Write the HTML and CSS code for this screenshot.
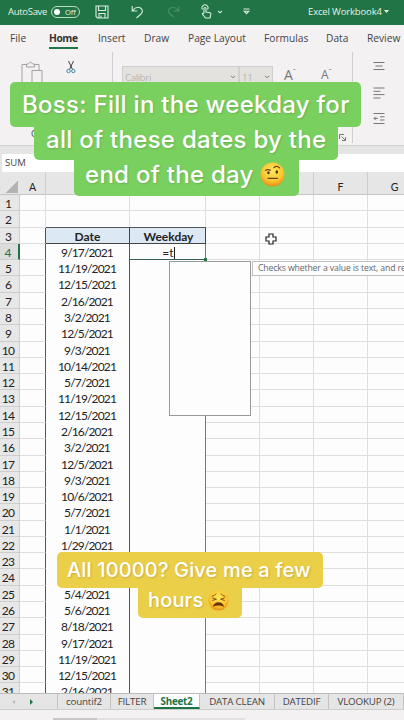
FILE: index.html
```
<!DOCTYPE html>
<html lang="en">
<head>
	<meta charset="utf-8">
	<title>Excel Workbook4</title>
	<link rel="stylesheet" href="styles.css">
</head>
<body>
	<div class="titlebar">
		<span class="autosave">AutoSave</span>
		<span class="toggle"><i></i>Off</span>
		<svg class="save" width="14" height="14" viewBox="0 0 14 14"><path d="M1 1h12v12H2.5L1 11.5zM3.5 1v4.5h7V1M4 13V8.5h6V13M6 13v-2.5"/></svg>
		<svg class="undo" width="13" height="14" viewBox="0 0 13 14"><path d="M1.2 1v5h5M1.5 5.7C4 2.5 7 1.3 9.8 3.2c2.3 1.7 1.9 4.1.2 5.8L5.5 13"/></svg>
		<svg class="redo" width="13" height="14" viewBox="0 0 13 14"><path d="M11.8 1v5h-5M11.5 5.7C9 2.5 6 1.3 3.2 3.2.9 4.9 1.3 7.3 3 9l3.5 3"/></svg>
		<svg class="touch" width="11" height="15" viewBox="0 0 11 15"><path d="M1.5 5.5a3 3 0 1 1 5 0M3 9V4.2q1-1.4 2 0V8l4 .8q1 .3.8 1.5L9 14H4.5L1.3 10q.5-1.4 1.7-.2"/></svg>
		<svg class="chev" width="6" height="4" viewBox="0 0 6 4"><path d="M1 .8l2 2 2-2"/></svg>
		<svg class="more" width="7" height="7" viewBox="0 0 7 7"><path d="M.5 1h6M1.2 3.2h4.6L3.5 5.6z"/></svg>
		<span class="book">Excel Workbook4</span>
		<svg class="drop" width="5" height="3" viewBox="0 0 5 3"><path d="M0 0h5L2.5 3z"/></svg>
	</div>

	<div class="ribbon">
		<div class="menu">
			<span class="m-file">File</span>
			<span class="m-home active">Home</span>
			<span class="m-insert">Insert</span>
			<span class="m-draw">Draw</span>
			<span class="m-page">Page Layout</span>
			<span class="m-form">Formulas</span>
			<span class="m-data">Data</span>
			<span class="m-rev">Review</span>
		</div>
		<div class="tools">
			<div class="clipboard">
				<svg class="paste" width="22" height="24" viewBox="0 0 22 24"><path d="M5 3.5H1V22h9M14 3.5h4V9M5.5 5V3h2q2-4 4 0h2v3h-8zM11 9.5h10V23H11z"/></svg>
				<svg class="cut" width="10" height="13" viewBox="0 0 10 13"><path class="blade" d="M2.5 0l4 8.5M7.5 0l-4 8.5"/><circle cx="2.5" cy="10" r="1.7"/><circle cx="7.3" cy="10" r="1.7"/></svg>
				<span class="launch-c">C</span>
			</div>
			<div class="font">
				<div class="fontbox"><span>Calibri</span><svg width="6" height="4" viewBox="0 0 6 4"><path d="M1 .8l2 2 2-2"/></svg></div>
				<div class="sizebox"><span>11</span><svg width="6" height="4" viewBox="0 0 6 4"><path d="M1 .8l2 2 2-2"/></svg></div>
				<span class="grow">A<sup>ˆ</sup></span>
				<span class="shrink">A<sup>ˇ</sup></span>
				<svg class="launch" width="7" height="7" viewBox="0 0 7 7"><path d="M.5 5V.5H5M2.5 2.5l4 4M6.5 3v3.5H3"/></svg>
			</div>
			<div class="align">
				<svg width="12" height="8" viewBox="0 0 12 8"><path d="M.5.5h11M2.5 4h7M.5 7.5h11"/></svg>
				<svg width="12" height="12" viewBox="0 0 12 12"><path d="M.5 1h11M.5 4.3h7M.5 7.6h11M.5 11h7"/></svg>
				<svg width="12" height="11" viewBox="0 0 12 11"><path d="M.5.5h11M7 3.8h4.5M7 7h4.5M.5 10.5h11M5 5.4H1M2.8 3.6L1 5.4l1.8 1.8"/></svg>
			</div>
		</div>
	</div>

	<div class="formula"><div class="namebox">SUM</div></div>

	<div class="sheet">
		<div class="cols">
			<span class="corner"></span><span>A</span><span></span><span></span><span></span><span></span><span>F</span><span>G</span>
		</div>
		<div class="rows" id="rows"></div>
		<div class="suggest"></div>
		<div class="tip">Checks whether a value is text, and re</div>
		<svg class="cursor" width="12" height="12" viewBox="0 0 12 12"><path d="M4 1h4v3h3v4H8v3H4V8H1V4h3z"/></svg>
	</div>

	<div class="tabs">
		<div class="nav"><i class="prev"></i><i class="next"></i></div>
		<span class="t1">countif2</span>
		<span class="t2">FILTER</span>
		<span class="t3 current">Sheet2</span>
		<span class="t4">DATA CLEAN</span>
		<span class="t5">DATEDIF</span>
		<span class="t6">VLOOKUP (2)</span>
	</div>
	<div class="status"><i class="s1"></i><i class="s2"></i></div>

	<div class="caption green">
		<div class="line g1"><span>Boss: Fill in the weekday for</span></div>
		<div class="line g2"><span>all of these dates by the</span></div>
		<div class="line g3"><span>end of the day</span>
			<svg width="25" height="25" viewBox="0 0 25 25">
				<defs><radialGradient id="face" cx=".5" cy=".35" r=".65"><stop offset="0" stop-color="#ffe65c"/><stop offset=".65" stop-color="#fbc72f"/><stop offset="1" stop-color="#e98c18"/></radialGradient></defs>
				<circle cx="12.5" cy="12.5" r="12" fill="url(#face)"/>
				<ellipse cx="8.5" cy="10.8" rx="1.2" ry="1.5" fill="#56330b"/>
				<ellipse cx="16.8" cy="10" rx="1.3" ry="1.8" fill="#56330b"/>
				<path d="M5.5 8.2q2.5-1.2 5 0M14 5.5q3-2.5 5.5.3M8 16.3h9.5" fill="none" stroke="#69400e" stroke-width="1.2" stroke-linecap="round"/>
			</svg>
		</div>
	</div>

	<div class="caption yellow">
		<div class="line y1"><span>All 10000? Give me a few</span></div>
		<div class="line y2"><span>hours</span>
			<svg width="21" height="21" viewBox="0 0 25 25">
				<circle cx="12.5" cy="12.5" r="12" fill="url(#face)"/>
				<path d="M5 7.5q3-.5 4.5-3M20 7.5q-3-.5-4.5-3M5.5 9.5l4.5 1.5-4.5 1.3M19.5 9.5L15 11l4.5 1.3" fill="none" stroke="#69400e" stroke-width="1" stroke-linecap="round"/>
				<path d="M6 20q1-5.5 6.5-5.5T19 20q-6.5-3-13 0z" fill="#69310c"/>
			</svg>
		</div>
	</div>

	<script>
		var dates = ["9/17/2021", "11/19/2021", "12/15/2021", "2/16/2021", "3/2/2021", "12/5/2021", "9/3/2021",
			"10/14/2021", "5/7/2021", "11/19/2021", "12/15/2021", "2/16/2021", "3/2/2021", "12/5/2021", "9/3/2021",
			"10/6/2021", "5/7/2021", "1/1/2021", "1/29/2021", "", "", "5/4/2021", "5/6/2021", "8/18/2021",
			"9/17/2021", "11/19/2021", "12/15/2021", "2/16/2021"];
		var html = "";
		for (var r = 1; r <= 31; r++) {
			var b = "", c = "", cls = "row";
			if (r == 3) { b = "Date"; c = "Weekday"; cls += " head"; }
			if (r > 3) { b = dates[r - 4]; cls += " data"; }
			if (r == 4) { c = "=t<i></i>"; cls += " editing"; }
			html += '<div class="' + cls + '"><span class="num">' + r + '</span><span class="a"></span><span class="b">' + b +
				'</span><span class="c">' + c + '</span><span></span><span></span><span></span><span></span></div>';
		}
		document.getElementById("rows").innerHTML = html;
	</script>
</body>
</html>
```
FILE: styles.css
```
* {
	box-sizing: border-box;
}
body {
	margin: 0;
	width: 404px;
	height: 720px;
	overflow: hidden;
	position: relative;
	background: #f3f1f2;
	font-family: "Open Sans", "Noto Sans", sans-serif;
	color: #444;
}
svg {
	display: block;
	flex: none;
	fill: none;
	stroke: #777;
}
span {
	white-space: nowrap;
}
.titlebar {
	height: 25px;
	background: #217445;
	color: #e3f3e8;
	display: flex;
	align-items: center;
	padding: 0 0 2px 8px;
	font-size: 9.5px;
}
.titlebar svg {
	stroke: #d9eee0;
	stroke-width: 1.1;
}
.autosave {
	width: 43px;
	letter-spacing: -0.3px;
}
.toggle {
	width: 29px;
	height: 12px;
	border: 1px solid #b9dcc6;
	border-radius: 6px;
	display: flex;
	align-items: center;
	gap: 5px;
	padding-left: 2px;
	font-size: 7.5px;
}
.toggle i {
	width: 6px;
	height: 6px;
	border-radius: 50%;
	background: #fff;
}
.save { margin-left: 15px; }
.undo { margin-left: 22px; }
.titlebar .redo { margin-left: 23px; stroke: #4b9069; }
.touch { margin-left: 21px; }
.chev { margin-left: 5px; }
.more { margin-left: 20px; }
.book {
	width: 74px;
	margin-left: 58px;
	letter-spacing: -0.15px;
}
.titlebar .drop {
	margin-left: 2px;
	fill: #e3f3e8;
	stroke: none;
}
.ribbon {
	height: 121px;
	border-bottom: 1px solid #d2d0d1;
}
.menu {
	height: 27px;
	padding-left: 10px;
	display: flex;
	font-size: 10.2px;
	line-height: 27px;
}
.menu span { height: 24px; }
.m-file { width: 39px; }
.m-home { width: 29px; margin-right: 20px; }
.m-insert { width: 46px; }
.m-draw { width: 44px; }
.m-page { width: 76px; }
.m-form { width: 62px; }
.m-data { width: 41px; }
.menu .active {
	font-weight: 700;
	letter-spacing: -0.4px;
	color: #333;
	border-bottom: 2px solid #217445;
}
.tools {
	height: 93px;
	display: flex;
}
.clipboard {
	width: 113px;
	height: 91px;
	border-right: 1px solid #d0ced0;
	display: grid;
	grid-template-columns: 23px 10px;
	grid-template-rows: 66px 20px;
	column-gap: 22px;
	padding: 9px 0 0 21px;
}
.paste { stroke: #a3a2a2; }
.cut .blade { stroke: #444; }
.cut circle { stroke: #4887aa; }
.launch-c {
	padding-left: 10px;
	font-size: 9px;
}
.font {
	width: 240px;
	height: 91px;
	border-right: 1px solid #d0ced0;
	display: flex;
	padding: 14px 0 0 9px;
}
.fontbox, .sizebox {
	height: 22px;
	border: 1px solid #cfcfcb;
	background: #e3e2df;
	color: #b5b4b1;
	display: flex;
	justify-content: space-between;
	align-items: center;
	padding: 0 2px;
	font-size: 9.5px;
	letter-spacing: -0.3px;
}
.fontbox { width: 117px; }
.sizebox { width: 34px; }
.grow, .shrink {
	font-size: 14px;
	line-height: 18px;
	color: #777;
	width: 37px;
	padding-left: 11px;
}
.shrink { font-size: 12px; width: 28px; }
.grow sup, .shrink sup { font-size: 8px; line-height: 0; }
.launch {
	align-self: flex-end;
	margin: 0 0 2px 1px;
}
.align {
	padding: 10px 0 0 20px;
	display: flex;
	flex-direction: column;
	gap: 17px;
}
.align svg:last-child { margin-top: -3px; }
.formula {
	height: 26px;
	padding: 8px 0 0 2px;
	background: #e6e5e6;
}
.namebox {
	height: 18px;
	background: #fff;
	padding-left: 3px;
	font-size: 9.5px;
	line-height: 18px;
}
.sheet {
	height: 521px;
	overflow: hidden;
	position: relative;
	background: #fdfdfe;
	font-family: Lato, "Open Sans", sans-serif;
	color: #222;
}
.cols, .row {
	display: grid;
	grid-template-columns: 20px 26px 84px 76px 54px 54px 54px 54px;
}
.cols {
	height: 23px;
	background: #e7e6e7;
	border-bottom: 1px solid #c6c5c6;
	font-size: 10.5px;
	line-height: 31px;
	text-align: center;
}
.cols span {
	border-right: 1px solid #cfcecf;
}
.cols .corner {
	background: linear-gradient(135deg, transparent 50%, #b5b4b5 50%);
	width: 12px;
	height: 12px;
	margin: 9px 0 0 6px;
	border: 0;
}
.row {
	height: 16.29px;
	font-size: 12px;
	line-height: 17.5px;
	text-align: center;
}
.row span {
	height: 16.29px;
	border-right: 1px solid #dedddf;
	border-bottom: 1px solid #dedddf;
}
.row .num {
	background: #e8e7e8;
	border-color: #cfcecf;
	padding-right: 3px;
	letter-spacing: -0.8px;
}
.head .a, .data .a { border-right-color: #555; }
.data .b {
	border-right-color: #555;
	border-bottom: 0;
	padding-right: 1px;
	letter-spacing: -0.85px;
}
.data .c { border-right-color: #777; border-bottom: 0; }
.head .b, .head .c {
	background: #dde8f5;
	border-color: #444;
	box-shadow: 0 -1px #555;
	font-weight: 700;
}
.row.head .c { padding-left: 2px; }
.editing .num { color: #217445; border-right: 2px solid #217445; background: #dcdcdc; }
.editing .c {
	border-bottom: 1px solid #365f52;
	padding-left: 2px;
	position: relative;
}
.editing .c i {
	display: inline-block;
	width: 1px;
	height: 12px;
	background: #222;
	vertical-align: -2px;
}
.editing .c::after {
	content: "";
	position: absolute;
	right: -2px;
	bottom: -2px;
	width: 3px;
	height: 3px;
	background: #217445;
}
.suggest {
	position: absolute;
	left: 169px;
	top: 89px;
	width: 82px;
	height: 155px;
	border: 1px solid #999;
	background: #fdfdfe;
}
.tip {
	position: absolute;
	left: 252px;
	top: 89px;
	width: 160px;
	height: 15px;
	border: 1px solid #c0bfc1;
	background: #fdfdfe;
	padding-left: 5px;
	font: 8.7px/12px "Open Sans", sans-serif;
	color: #666;
	white-space: nowrap;
	letter-spacing: -0.13px;
}
.cursor {
	position: absolute;
	left: 265px;
	top: 61px;
	fill: #fff;
	stroke: #222;
	stroke-width: 1.2;
}
.tabs {
	height: 17px;
	background: #e6e5e6;
	border-top: 1px solid #bbb;
	border-bottom: 1px solid #cfcecf;
	display: flex;
	font-size: 9.8px;
	line-height: 15px;
	letter-spacing: -0.2px;
	text-align: center;
}
.tabs span { border-right: 1px solid #c4c3c4; }
.nav {
	width: 58px;
	border-right: 1px solid #c4c3c4;
	display: flex;
	align-items: center;
	gap: 15px;
	padding-left: 12px;
}
.nav i {
	border: 3px solid transparent;
	border-width: 3px 0 3px 3px;
	border-left-color: #217445;
}
.nav .prev {
	border-width: 2px 3px 2px 0;
	border-right-color: #bbb;
}
.t1 { width: 53px; }
.t2 { width: 43px; }
.t3 { width: 46px; }
.t4 { width: 75px; }
.t5 { width: 54px; }
.t6 { width: 75px; }
.tabs .current {
	background: #fff;
	color: #217445;
	font-weight: 700;
	border-bottom: 2px solid #217445;
}
.status {
	height: 10px;
	display: flex;
	align-items: flex-end;
	padding-left: 53px;
}
.status i {
	width: 44px;
	height: 2px;
	background: #c9c8c9;
}
.status .s2 {
	width: 148px;
	background: #e2e1e2;
}
.caption {
	position: absolute;
	left: 0;
	width: 404px;
	display: flex;
	flex-direction: column;
	color: #fff;
	font-family: Inter, sans-serif;
	font-weight: 500;
	text-shadow: 1px 1px 2px rgba(0, 0, 0, 0.15);
}
.line {
	display: flex;
	align-items: center;
}
.line svg { stroke: none; }
.green {
	top: 82px;
	font-size: 24px;
	letter-spacing: 0.28px;
}
.green .line { background: #7ad05f; }
.green .g1 {
	width: 351px;
	height: 45px;
	margin-left: 10px;
	padding-left: 12px;
	border-radius: 5px;
}
.green .g2 {
	width: 304px;
	height: 34px;
	margin-left: 34px;
	padding: 0 0 8px 12px;
	margin-top: -1px;
	border-radius: 0 0 5px 5px;
}
.green .g3 {
	width: 225px;
	height: 36px;
	margin-left: 74px;
	padding: 0 0 8px 11px;
	border-radius: 0 0 5px 5px;
	gap: 6px;
}
.yellow {
	top: 552px;
	font-size: 20px;
	letter-spacing: 0.15px;
}
.yellow .line { background: #ebcf49; }
.yellow .y1 {
	width: 266px;
	height: 36px;
	margin-left: 57px;
	padding-left: 10px;
	border-radius: 5px;
}
.yellow .y2 {
	width: 104px;
	height: 31px;
	margin: -1px 0 0 138px;
	padding: 0 0 5px 10px;
	border-radius: 0 0 5px 5px;
	gap: 5px;
}
```
